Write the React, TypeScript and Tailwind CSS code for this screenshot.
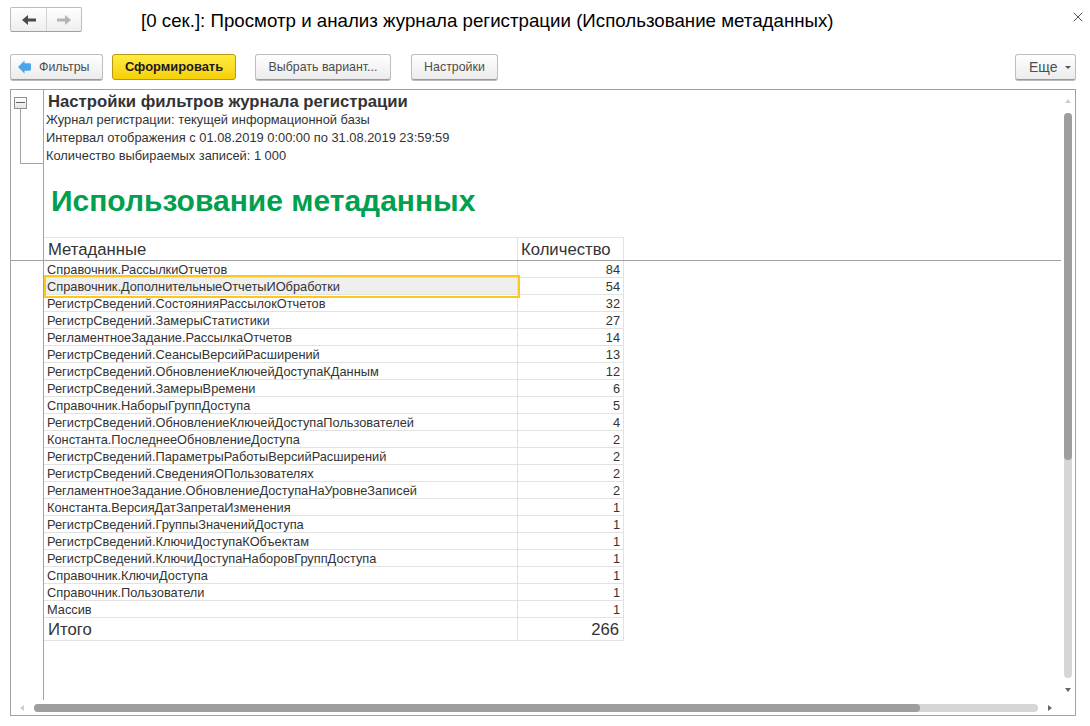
import { X } from 'lucide-react';

const rows: [string, number][] = [
  ['Справочник.РассылкиОтчетов', 84],
  ['Справочник.ДополнительныеОтчетыИОбработки', 54],
  ['РегистрСведений.СостоянияРассылокОтчетов', 32],
  ['РегистрСведений.ЗамерыСтатистики', 27],
  ['РегламентноеЗадание.РассылкаОтчетов', 14],
  ['РегистрСведений.СеансыВерсийРасширений', 13],
  ['РегистрСведений.ОбновлениеКлючейДоступаКДанным', 12],
  ['РегистрСведений.ЗамерыВремени', 6],
  ['Справочник.НаборыГруппДоступа', 5],
  ['РегистрСведений.ОбновлениеКлючейДоступаПользователей', 4],
  ['Константа.ПоследнееОбновлениеДоступа', 2],
  ['РегистрСведений.ПараметрыРаботыВерсийРасширений', 2],
  ['РегистрСведений.СведенияОПользователях', 2],
  ['РегламентноеЗадание.ОбновлениеДоступаНаУровнеЗаписей', 2],
  ['Константа.ВерсияДатЗапретаИзменения', 1],
  ['РегистрСведений.ГруппыЗначенийДоступа', 1],
  ['РегистрСведений.КлючиДоступаКОбъектам', 1],
  ['РегистрСведений.КлючиДоступаНаборовГруппДоступа', 1],
  ['Справочник.КлючиДоступа', 1],
  ['Справочник.Пользователи', 1],
  ['Массив', 1],
];

function ToolButton({ label, width }: { label: string; width: string }) {
  return (
    <button className={`${width} h-[26px] rounded-[3px] border border-[#bdbdbd] border-b-[#999] bg-gradient-to-b from-white to-[#ececec] text-[12.4px] text-[#4d4d4d] shadow-[0_1px_0_#bbb]`}>
      {label}
    </button>
  );
}

export default function App() {
  return (
    <div className="h-[726px] w-[1090px] overflow-hidden bg-white font-['Liberation_Sans',Arial,sans-serif] text-[#333]">
      {/* заголовок окна */}
      <div className="flex h-[54px] items-start pl-[10px] pt-[7px]">
        <div className="flex h-[25px] w-[72px] rounded-[2px] border border-[#bdbdbd] border-b-[#a0a0a0] bg-gradient-to-b from-white to-[#eeeeee]">
          <div className="flex w-[36px] items-center justify-center border-r border-[#d4d4d4]">
            <svg width="14" height="10" viewBox="0 0 14 10"><path d="M0 5 L6 0 V3.5 H14 V6.5 H6 V10 Z" fill="#4a4a4a" /></svg>
          </div>
          <div className="flex flex-1 items-center justify-center">
            <svg width="14" height="10" viewBox="0 0 14 10"><path d="M14 5 L8 0 V3.5 H0 V6.5 H8 V10 Z" fill="#b4b4b4" /></svg>
          </div>
        </div>
        <div className="ml-[59px] mt-[2px] flex-1 whitespace-nowrap text-[18.72px] leading-[24px] text-black">
          [0 сек.]: Просмотр и анализ журнала регистрации (Использование метаданных)
        </div>
        <X className="mr-[4px] mt-[2px] text-[#555]" size={16} strokeWidth={1.5} />
      </div>

      {/* командная панель */}
      <div className="flex h-[35px] items-start pl-[10px] pr-[14px]">
        <button className="flex h-[26px] w-[93px] items-center rounded-[3px] border border-[#bdbdbd] border-b-[#999] bg-gradient-to-b from-white to-[#ececec] pl-[7px] text-[12.4px] text-[#4d4d4d] shadow-[0_1px_0_#bbb]">
          <svg width="13" height="14" viewBox="0 0 14 14"><path d="M0 7 L7 0 V3 H12.5 Q14 3 14 4.5 V9.5 Q14 11 12.5 11 H7 V14 Z" fill="#4aa6e8" /></svg>
          <span className="ml-[8px]">Фильтры</span>
        </button>
        <button className="ml-[9px] h-[26px] w-[124px] rounded-[3px] border border-[#b8980c] bg-gradient-to-b from-[#ffec3d] to-[#f5d000] text-[12.9px] font-bold text-[#1a1a1a]">
          Сформировать
        </button>
        <div className="ml-[19px]"><ToolButton label="Выбрать вариант..." width="w-[136px]" /></div>
        <div className="ml-[20px]"><ToolButton label="Настройки" width="w-[87px]" /></div>
        <button className="ml-auto flex h-[26px] w-[61px] items-center gap-[7px] rounded-[3px] border border-[#bdbdbd] border-b-[#999] bg-gradient-to-b from-white to-[#ececec] pl-[13px] text-[14px] text-[#4d4d4d] shadow-[0_1px_0_#bbb]">
          Еще
          <span className="h-0 w-0 border-x-[3px] border-t-[3px] border-x-transparent border-t-[#555]" />
        </button>
      </div>

      {/* табличный документ */}
      <div className="relative ml-[10px] h-[627px] w-[1066px] border border-[#a3a3a3]">
        <div className="flex h-[171px] w-[1050px] border-b border-[#a3a3a3]">
          <div className="relative w-[33px] shrink-0 border-r border-[#a3a3a3]">
            <div className="absolute left-[3px] top-[7px] h-[12px] w-[13px] border border-[#8f8f8f] bg-gradient-to-b from-white to-[#e4e4e4]">
              <div className="mx-auto mt-[4px] h-px w-[9px] bg-[#666]" />
            </div>
            <div className="absolute left-[9px] top-[19px] h-[55px] w-[23px] border-b border-l border-[#a3a3a3]" />
          </div>
          <div className="flex flex-1 flex-col">
            <div className="mt-[2px] pl-[4px] text-[16.7px] font-bold leading-[19px] text-[#333]">Настройки фильтров журнала регистрации</div>
            <div className="pl-[2px] text-[12.87px] leading-[18px]">
              <div>Журнал регистрации: текущей информационной базы</div>
              <div>Интервал отображения с 01.08.2019 0:00:00 по 31.08.2019 23:59:59</div>
              <div>Количество выбираемых записей: 1 000</div>
            </div>
            <div className="mt-[18px] pl-[7px] text-[30px] font-bold leading-[36px] text-[#00a04f]">Использование метаданных</div>
            <div className="mt-auto flex h-[23px] w-[580px] border-t border-[#e2e2e2] text-[16.7px] leading-[24px]">
              <div className="w-[474px] border-r border-[#e2e2e2] pl-[4px]">Метаданные</div>
              <div className="w-[106px] border-r border-[#e2e2e2] pl-[3px]">Количество</div>
            </div>
          </div>
        </div>

        <div className="flex h-[439px]">
          <div className="w-[33px] shrink-0 border-r border-[#a3a3a3]" />
          <div className="relative w-[580px]">
            {rows.map(([name, count], i) => (
              <div key={name} className="flex h-[17px] border-b border-[#e2e2e2] text-[12.8px] leading-[18px]">
                <div className={`w-[474px] whitespace-nowrap border-r border-[#e2e2e2] pl-[3px] ${i === 1 ? 'bg-[#efefef]' : ''}`}>{name}</div>
                <div className="w-[106px] border-r border-[#e2e2e2] pr-[3px] text-right">{count}</div>
              </div>
            ))}
            <div className="flex h-[23px] border-b border-[#e2e2e2] text-[16.7px] leading-[23px]">
              <div className="w-[474px] border-r border-[#e2e2e2] pl-[4px]">Итого</div>
              <div className="w-[106px] border-r border-[#e2e2e2] pr-[4px] text-right">266</div>
            </div>
            {/* рамка текущей ячейки */}
            <div className="absolute left-0 top-[14px] h-[23px] w-[476px] border-2 border-[#fbc91d]" />
          </div>
        </div>

        {/* полосы прокрутки */}
        <span className="absolute left-[1054px] top-[9px] h-0 w-0 border-x-[3px] border-b-[4px] border-x-transparent border-b-[#cfcfcf]" />
        <div className="absolute left-[1053px] top-[23px] h-[565px] w-[8px] rounded-full bg-[#d6d6d6]">
          <div className="h-[347px] rounded-full bg-[#9e9e9e]" />
        </div>
        <span className="absolute left-[1054px] top-[598px] h-0 w-0 border-x-[3px] border-t-[4px] border-x-transparent border-t-[#666]" />
        <span className="absolute left-[9px] top-[615px] h-0 w-0 border-y-[3px] border-r-[4px] border-y-transparent border-r-[#cfcfcf]" />
        <div className="absolute left-[23px] top-[614px] flex h-[8px] w-[1004px] rounded-full bg-[#d6d6d6]">
          <div className="h-[8px] w-[886px] rounded-full bg-[#9e9e9e]" />
        </div>
        <span className="absolute left-[1037px] top-[615px] h-0 w-0 border-y-[3px] border-l-[4px] border-y-transparent border-l-[#666]" />
      </div>
    </div>
  );
}
